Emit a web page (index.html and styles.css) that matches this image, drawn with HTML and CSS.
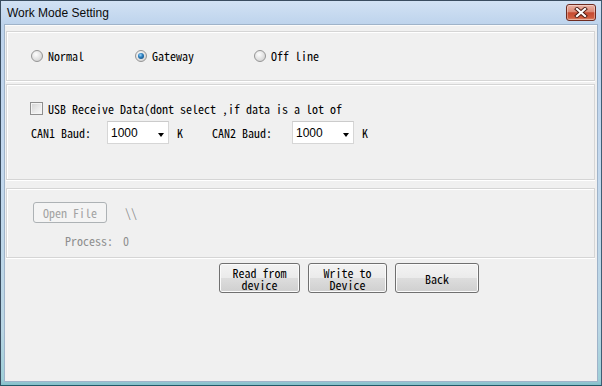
FILE: index.html
```html
<!DOCTYPE html>
<html>
<head>
<meta charset="utf-8">
<title>Work Mode Setting</title>
<link rel="stylesheet" href="styles.css">
</head>
<body>
<div class="window">
  <div class="titlebar">
    <span class="title">Work Mode Setting</span>
    <span class="close">
      <svg width="14" height="11" viewBox="0 0 14 11">
        <path d="M3 2 L11 9 M11 2 L3 9" stroke="#4a1a12" stroke-width="4" stroke-linecap="square"/>
        <path d="M3 2 L11 9 M11 2 L3 9" stroke="#ffffff" stroke-width="2.2" stroke-linecap="square"/>
      </svg>
    </span>
  </div>
  <div class="client">
    <div class="group g1">
      <label class="radio-item w1"><span class="radio"></span><span class="txt">Normal</span></label>
      <label class="radio-item w2"><span class="radio checked"></span><span class="txt">Gateway</span></label>
      <label class="radio-item"><span class="radio"></span><span class="txt">Off line</span></label>
    </div>
    <div class="group g2">
      <div class="check-row"><span class="checkbox"></span><span class="txt">USB Receive Data(dont select ,if data is a lot of</span></div>
      <div class="baud-row">
        <span class="txt lbl1">CAN1 Baud:</span>
        <span class="combo"><span class="val">1000</span><span class="arrow"></span></span>
        <span class="txt unit">K</span>
        <span class="txt lbl2">CAN2 Baud:</span>
        <span class="combo"><span class="val">1000</span><span class="arrow"></span></span>
        <span class="txt unit">K</span>
      </div>
    </div>
    <div class="group g3">
      <div class="file-row"><span class="btn-disabled txt">Open File</span><span class="txt dim path">\\</span></div>
      <div class="proc-row"><span class="txt dim">Process:</span><span class="txt dim proc-val">0</span></div>
    </div>
    <div class="actions">
      <span class="btn w-read"><span class="line">Read from</span><span class="line">device</span></span>
      <span class="btn w-write"><span class="line">Write to</span><span class="line">Device</span></span>
      <span class="btn w-back"><span class="line">Back</span></span>
    </div>
  </div>
</div>
</body>
</html>
```
FILE: styles.css
```css
* { box-sizing: border-box; }
html, body { margin: 0; padding: 0; background: #fff; }
body { font-family: "Noto Sans Mono CJK SC", "Liberation Mono", monospace; }

.window {
  width: 602px;
  height: 386px;
  border: 1px solid #3a4d60;
  border-bottom-color: #215967;
  border-right-color: #3f5d74;
  background: linear-gradient(180deg, #d2e2f4 0px, #bdd3ec 24px, #c3d8ee 160px, #b9d6e4 330px, #9fcfd8 378px, #7dbac6 386px);
  padding: 0 4px 4px 4px;
  display: flex;
  flex-direction: column;
}

.titlebar {
  height: 24px;
  display: flex;
  justify-content: space-between;
  align-items: flex-start;
}
.title {
  font-family: "Liberation Sans", sans-serif;
  font-size: 12px;
  line-height: 14px;
  color: #0b0b0b;
  margin: 5px 0 0 2px;
}
.close {
  width: 30px;
  height: 17px;
  margin: 3px 1px 0 0;
  border: 1px solid #6e2b20;
  border-radius: 3px;
  background: linear-gradient(180deg, #eab3a6 0%, #dc8a76 45%, #c64a31 52%, #cf5d3f 85%, #e0937a 100%);
  box-shadow: inset 0 0 0 1px rgba(255,255,255,0.35);
  display: flex;
  align-items: center;
  justify-content: center;
}
.close svg { display: block; }

.client {
  flex: 1;
  background: #f0f0f0;
  box-shadow: 0 0 0 1px #9fb3c9;
  border-top: 1px solid #fbfbfb;
  padding-top: 5px;
  display: flex;
  flex-direction: column;
}

.group {
  margin: 0 2px 0 1px;
  border: 1px solid #d5d5d5;
  box-shadow: inset 1px 1px 0 #ffffff, 0 1px 0 #ffffff;
}

.txt, .line {
  font-family: "Noto Sans Mono CJK SC", "Liberation Mono", monospace;
  font-size: 12px;
  color: #000;
  white-space: pre;
  line-height: 14px;
}

.g1 {
  height: 50px;
  display: flex;
  align-items: center;
  padding-left: 24px;
}
.radio-item { display: flex; align-items: center; gap: 5px; }
.w1 { width: 104px; }
.w2 { width: 119px; }
.radio {
  width: 12px;
  height: 12px;
  border-radius: 50%;
  border: 1px solid #959595;
  background: radial-gradient(circle at 40% 35%, #fdfdfd 0%, #e6e6e6 45%, #c9c9c9 100%);
  position: relative;
}
.radio.checked::after {
  content: "";
  position: absolute;
  left: 2px;
  top: 2px;
  width: 6px;
  height: 6px;
  border-radius: 50%;
  background: radial-gradient(circle at 40% 35%, #9fd8ff 0%, #2c7fbf 40%, #0c3f6e 100%);
}

.g2 {
  height: 96px;
  margin-top: 3px;
  padding: 16px 0 0 23px;
  display: flex;
  flex-direction: column;
  gap: 5px;
}
.check-row { height: 15px; display: flex; align-items: center; gap: 5px; }
.checkbox {
  width: 13px;
  height: 13px;
  border: 1px solid #8f8f8f;
  background: linear-gradient(135deg, #d2d2d2 0%, #ececec 60%, #f8f8f8 100%);
  box-shadow: inset 0 0 0 1px #f4f4f4;
}
.baud-row { height: 23px; display: flex; align-items: center; padding-left: 1px; }
.lbl1 { width: 76px; }
.lbl2 { width: 80px; margin-left: 29px; }
.unit { margin-left: 8px; }
.combo {
  width: 62px;
  height: 23px;
  border: 1px solid #d6d6d6;
  border-top-color: #cbcbcb;
  background: #fff;
  display: flex;
  align-items: center;
  justify-content: space-between;
  padding: 0 4px 0 3px;
}
.val {
  font-family: "Liberation Sans", sans-serif;
  font-size: 12px;
  color: #000;
}
.arrow {
  width: 0;
  height: 0;
  border-left: 3.5px solid transparent;
  border-right: 3.5px solid transparent;
  border-top: 4px solid #000;
  margin-top: 4px;
}

.g3 {
  height: 70px;
  margin-top: 8px;
  padding: 13px 0 0 26px;
}
.file-row { display: flex; align-items: center; height: 21px; }
.btn-disabled {
  width: 74px;
  height: 21px;
  border: 1px solid #adb2b5;
  border-radius: 3px;
  background: #f4f4f4;
  color: #a3a3a3;
  display: flex;
  align-items: center;
  justify-content: center;
}
.dim { color: #8e8e8e; }
.path { margin-left: 18px; }
.proc-row { display: flex; align-items: center; height: 14px; margin-top: 11px; padding-left: 32px; }
.proc-val { margin-left: 10px; }

.actions {
  margin-top: 5px;
  padding-left: 214px;
  display: flex;
  gap: 8px;
}
.btn {
  height: 30px;
  border: 1px solid #707070;
  border-radius: 3px;
  background: linear-gradient(180deg, #f3f3f3 0%, #ebebeb 50%, #dddddd 51%, #cfcfcf 100%);
  box-shadow: inset 0 0 0 1px #fbfbfb;
  display: flex;
  flex-direction: column;
  align-items: center;
  justify-content: center;
  padding-top: 1px;
}
.btn .line { display: block; height: 11.5px; line-height: 11.5px; }
.w-read { width: 81px; }
.w-write { width: 79px; }
.w-back { width: 84px; }
```
